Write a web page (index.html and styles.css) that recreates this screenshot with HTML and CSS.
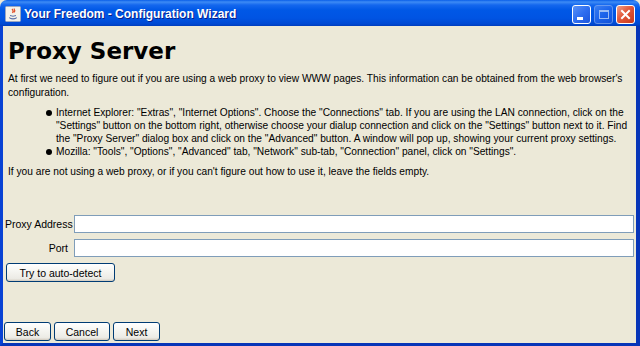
FILE: index.html
```html
<!DOCTYPE html>
<html>
<head>
<meta charset="utf-8">
<link rel="stylesheet" href="styles.css">
</head>
<body>
<div class="window">
  <div class="titlebar">
    <div class="app-icon">
      <svg width="16" height="16" viewBox="0 0 16 16">
        <rect x="0.5" y="0.5" width="15" height="15" rx="1" fill="#f4f2ea" stroke="#9aa6c0"/>
        <path d="M4 11 Q8 13.5 12 11 L11.5 12.5 Q8 14.5 4.5 12.5 Z" fill="#5a6fa8"/>
        <path d="M5 9.5 Q8 11 11 9.5" stroke="#5a6fa8" stroke-width="1" fill="none"/>
        <path d="M7 3 Q9 5 7.5 7 M9 2.5 Q10.5 4.5 9 6.5" stroke="#e0502a" stroke-width="1.2" fill="none"/>
      </svg>
    </div>
    <div class="title">Your Freedom - Configuration Wizard</div>
    <div class="controls">
      <div class="ctl ctl-min"><span class="min-bar"></span></div>
      <div class="ctl ctl-max disabled"><span class="max-box"></span></div>
      <div class="ctl ctl-close">
        <svg width="17" height="17" viewBox="0 0 17 17"><path d="M5 5 L12 12 M12 5 L5 12" stroke="#fff" stroke-width="2" stroke-linecap="square"/></svg>
      </div>
    </div>
  </div>
  <div class="client">
    <h1 class="heading">Proxy Server</h1>
    <p class="para">At first we need to figure out if you are using a web proxy to view WWW pages. This information can be obtained from the web browser's<br>configuration.</p>
    <ul class="bullets">
      <li>Internet Explorer: "Extras", "Internet Options". Choose the "Connections" tab. If you are using the LAN connection, click on the<br>"Settings" button on the bottom right, otherwise choose your dialup connection and click on the "Settings" button next to it. Find<br>the "Proxy Server" dialog box and click on the "Advanced" button. A window will pop up, showing your current proxy settings.</li>
      <li>Mozilla: "Tools", "Options", "Advanced" tab, "Network" sub-tab, "Connection" panel, click on "Settings".</li>
    </ul>
    <p class="para">If you are not using a web proxy, or if you can't figure out how to use it, leave the fields empty.</p>
    <div class="form">
      <label class="lbl">Proxy Address</label>
      <div class="field"></div>
      <label class="lbl">Port</label>
      <div class="field"></div>
    </div>
    <div class="detect-row"><button class="btn detect">Try to auto-detect</button></div>
    <div class="spacer"></div>
    <div class="nav">
      <button class="btn nav-btn back">Back</button>
      <button class="btn nav-btn cancel">Cancel</button>
      <button class="btn nav-btn next">Next</button>
    </div>
  </div>
</div>
</body>
</html>
```
FILE: styles.css
```css
* { box-sizing: border-box; }
html, body { margin: 0; padding: 0; }
body { width: 640px; height: 346px; overflow: hidden; background: #ece9d8; }
.window { width: 640px; height: 346px; display: flex; flex-direction: column; }
.titlebar {
  height: 26px; flex: none; display: flex; align-items: center;
  background: linear-gradient(to bottom, #0a5ee8 0px, #3d8bf5 2px, #1467ee 5px, #0058e6 10px, #0054e3 18px, #0049d2 24px, #003dbb 26px);
  border-radius: 7px 7px 0 0;
  padding: 0 5px 0 5px;
}
.app-icon { width: 16px; height: 16px; margin-top: 2px; }
.app-icon svg { display: block; }
.title {
  margin-left: 3px; margin-top: 1px;
  font-family: "Liberation Sans", Arial, sans-serif; font-weight: bold; font-size: 12px;
  color: #fff; text-shadow: 1px 1px 0 #0a1f8a; letter-spacing: 0;
  flex: 1;
}
.controls { display: flex; gap: 3px; margin-top: 2px; }
.ctl { width: 19px; height: 19px; border-radius: 3px; border: 1px solid #fff; display: flex; align-items: center; justify-content: center; }
.ctl-min, .ctl-max { background: linear-gradient(135deg, #5a92f7 0%, #2f6ef0 50%, #1c55dc 100%); }
.ctl-max.disabled { opacity: 0.6; border-color: #9fbcf5; }
.ctl-close { background: linear-gradient(135deg, #f0a08a 0%, #e2583a 45%, #c8391c 100%); }
.min-bar { width: 6px; height: 3px; background: #fff; margin-top: 8px; margin-right: 4px; }
.max-box { width: 10px; height: 9px; border: 1px solid #fff; border-top-width: 2px; }
.ctl-close svg { display: block; }
.client {
  flex: 1; display: flex; flex-direction: column;
  border-left: 3px solid #0842d4; border-right: 4px solid #0735b8; border-bottom: 3px solid #0735b8;
  padding: 0 2px 2px 1px;
  font-family: "Liberation Sans", Arial, sans-serif; font-size: 10.2px; color: #000;
}
.heading {
  margin: 11px 0 0 4px; font-family: "DejaVu Sans", Verdana, sans-serif; font-weight: bold;
  font-size: 23px; line-height: 28px;
}
.para { margin: 7px 0 0 4px; line-height: 14px; white-space: nowrap; }
.bullets { margin: 6px 0 0 0; padding-left: 52px; line-height: 13px; list-style: none; white-space: nowrap; }
.bullets li { position: relative; }
.bullets li::before {
  content: ""; position: absolute; left: -10px; top: 4px; width: 6px; height: 6px; border-radius: 50%; background: #000;
}
.form { margin-top: 36px; padding-left: 1px; display: grid; grid-template-columns: 63px 1fr; column-gap: 6px; row-gap: 6px; align-items: center; }
.lbl { text-align: right; font-size: 10.5px; white-space: nowrap; }
.field { height: 18px; background: #fff; border: 1px solid #7f9db9; }
.detect-row { margin-top: 6px; display: flex; padding-left: 2px; }
.btn {
  font-family: "Liberation Sans", Arial, sans-serif; font-size: 10.5px; color: #000;
  border: 1px solid #003c74; border-radius: 3px;
  background: linear-gradient(to bottom, #ffffff 0%, #f6f6f2 40%, #ecebe5 85%, #d6d0c5 100%);
  box-shadow: inset 0 -1px 0 #d6d0c5;
  padding: 0; height: 19px;
}
.detect { width: 109px; }
.spacer { flex: 1; }
.nav { display: flex; gap: 3px; }
.back { width: 47px; }
.cancel { width: 56px; }
.next { width: 47px; }
```
